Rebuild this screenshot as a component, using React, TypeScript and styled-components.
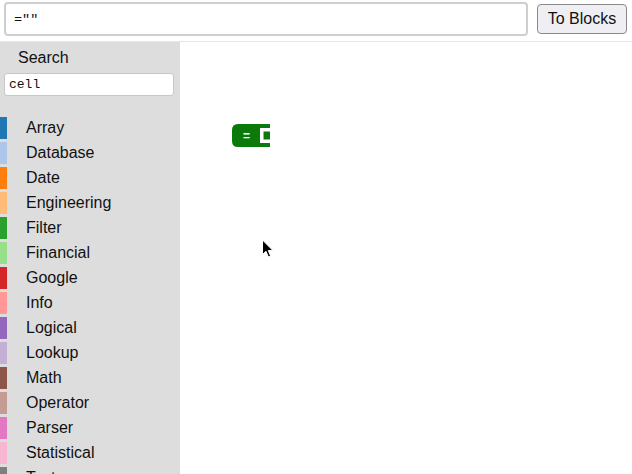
import React, { useState } from 'react';
import styled, { createGlobalStyle } from 'styled-components';

const GlobalStyle = createGlobalStyle`
  html, body {
    margin: 0;
    padding: 0;
    height: 100%;
    overflow: hidden;
    font-family: "Liberation Sans", Arial, sans-serif;
  }
  #root {
    height: 100%;
  }
`;

const Page = styled.div`
  display: flex;
  flex-direction: column;
  height: 100vh;
`;

const Header = styled.div`
  display: flex;
  align-items: flex-start;
  gap: 9px;
  height: 42px;
  box-sizing: border-box;
  padding: 2px 5px 0 4px;
  border-bottom: 1px solid #e6e6e6;
`;

const FormulaInput = styled.input`
  flex: 1;
  height: 34px;
  box-sizing: border-box;
  border: 2px solid #cfcfcf;
  border-radius: 4px;
  padding: 0 8px;
  font-family: "Liberation Mono", "Courier New", monospace;
  font-size: 13.5px;
  color: #111;
  outline: none;
`;

const ConvertButton = styled.button`
  margin-top: 2px;
  width: 90px;
  height: 30px;
  box-sizing: border-box;
  background: #efeff3;
  border: 1px solid #8a8a8a;
  border-radius: 4px;
  font-family: "Liberation Sans", Arial, sans-serif;
  font-size: 16px;
  color: #111;
  padding: 0;
  cursor: pointer;
`;

const Body = styled.div`
  flex: 1;
  display: flex;
  min-height: 0;
`;

const Sidebar = styled.div`
  width: 180px;
  background: #dddddd;
  display: flex;
  flex-direction: column;
  overflow: hidden;
`;

const SearchBox = styled.div`
  display: flex;
  flex-direction: column;
  padding: 7px 0 13px;
`;

const SearchLabel = styled.div`
  padding-left: 18px;
  font-size: 16px;
  line-height: 18px;
  color: #111;
  margin-bottom: 6px;
`;

const SearchInput = styled.input`
  margin-left: 4px;
  width: 170px;
  height: 23px;
  box-sizing: border-box;
  border: 1px solid #c8c8c8;
  border-radius: 3px;
  padding: 0 4px;
  font-family: "Liberation Mono", "Courier New", monospace;
  font-size: 13px;
  color: #111;
  background: #fff;
  outline: none;
`;

const Divider = styled.div`
  height: 2px;
  background: #ececec;
`;

const CategoryList = styled.ul`
  list-style: none;
  margin: 0;
  padding: 6px 0 0;
`;

const CategoryRow = styled.li`
  display: flex;
  align-items: center;
  height: 25px;
  font-size: 16px;
  color: #111;
`;

const Swatch = styled.span<{ $color: string }>`
  width: 7px;
  height: 22px;
  background: ${(p) => p.$color};
  margin-right: 19px;
`;

const Workspace = styled.div`
  flex: 1;
  position: relative;
  background: #fff;
`;

const BlockShape = styled.svg`
  position: absolute;
  left: 50px;
  top: 78px;
`;

const Pointer = styled.svg`
  position: absolute;
  left: 81px;
  top: 197px;
`;

const categories = [
  ['Array', '#1f77b4'],
  ['Database', '#aec7e8'],
  ['Date', '#ff7f0e'],
  ['Engineering', '#ffbb78'],
  ['Filter', '#2ca02c'],
  ['Financial', '#98df8a'],
  ['Google', '#d62728'],
  ['Info', '#ff9896'],
  ['Logical', '#9467bd'],
  ['Lookup', '#c5b0d5'],
  ['Math', '#8c564b'],
  ['Operator', '#c49c94'],
  ['Parser', '#e377c2'],
  ['Statistical', '#f7b6d2'],
  ['Text', '#7f7f7f'],
  ['Web', '#c7c7c7'],
];

export default function App() {
  const [formula, setFormula] = useState('=""');
  const [search, setSearch] = useState('cell');

  return (
    <Page>
      <GlobalStyle />
      <Header>
        <FormulaInput value={formula} onChange={(e) => setFormula(e.target.value)} />
        <ConvertButton>To Blocks</ConvertButton>
      </Header>
      <Body>
        <Sidebar>
          <SearchBox>
            <SearchLabel>Search</SearchLabel>
            <SearchInput value={search} onChange={(e) => setSearch(e.target.value)} />
          </SearchBox>
          <Divider />
          <CategoryList>
            {categories.map(([name, color]) => (
              <CategoryRow key={name}>
                <Swatch $color={color} />
                {name}
              </CategoryRow>
            ))}
          </CategoryList>
        </Sidebar>
        <Workspace>
          <BlockShape width="44" height="28" viewBox="0 0 44 28">
            <path
              d="M8,4 H40 V27 H8 Q2,27 2,21 V10 Q2,4 8,4 Z"
              fill="#0b7a0b"
            />
            <path d="M30,8 H40 V11.5 H33.5 V19.5 H40 V23 H30 Z" fill="#fff" />
            <text
              x="16.5"
              y="19.5"
              textAnchor="middle"
              fill="#fff"
              fontSize="12"
              fontWeight="bold"
              fontFamily="Liberation Sans, Arial, sans-serif"
            >
              =
            </text>
          </BlockShape>
          <Pointer width="14" height="20" viewBox="0 0 14 20">
            <path
              d="M1.5,1 V15.5 L5,12.3 L7.4,18 L9.6,17 L7.3,11.6 H12 Z"
              fill="#000"
              stroke="#fff"
              strokeWidth="1"
              strokeLinejoin="round"
            />
          </Pointer>
        </Workspace>
      </Body>
    </Page>
  );
}
